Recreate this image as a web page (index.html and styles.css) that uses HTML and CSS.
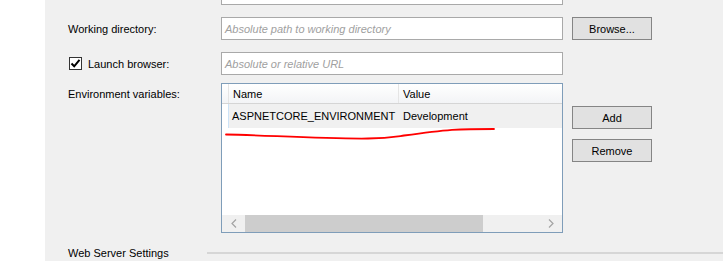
FILE: index.html
```html
<!DOCTYPE html>
<html lang="en">
<head>
  <meta charset="UTF-8">
  <title>Debug profile</title>
  <link rel="stylesheet" href="styles.css">
</head>
<body>
  <div class="gutter"></div>
  <div class="panel">
    <div class="row cut">
      <div class="label"></div>
      <div class="textbox"></div>
    </div>

    <div class="row first">
      <div class="label">Working directory:</div>
      <div class="textbox"><span class="hint">Absolute path to working directory</span></div>
      <button class="btn">Browse...</button>
    </div>

    <div class="row">
      <label class="label check">
        <span class="box">
          <svg width="11" height="11" viewBox="0 0 11 11"><path d="M1.5 5.5 L4.2 8.3 L9.5 1.8" fill="none" stroke="#000" stroke-width="2"/></svg>
        </span>
        Launch browser:
      </label>
      <div class="textbox"><span class="hint">Absolute or relative URL</span></div>
    </div>

    <div class="row env">
      <div class="label top">Environment variables:</div>
      <div class="listview">
        <div class="lv-head">
          <div class="lv-lead"></div>
          <div class="col name">Name</div>
          <div class="col value">Value</div>
        </div>
        <div class="lv-row">
          <div class="cell name">ASPNETCORE_ENVIRONMENT</div>
          <div class="cell value">Development</div>
        </div>
        <div class="lv-body"></div>
        <div class="hscroll">
          <div class="arrow">
            <svg width="6" height="9" viewBox="0 0 6 9"><path d="M5 0.5 L1 4.5 L5 8.5" fill="none" stroke="#a3a3a3" stroke-width="1.2"/></svg>
          </div>
          <div class="thumb"></div>
          <div class="track"></div>
          <div class="arrow">
            <svg width="6" height="9" viewBox="0 0 6 9"><path d="M1 0.5 L5 4.5 L1 8.5" fill="none" stroke="#a3a3a3" stroke-width="1.2"/></svg>
          </div>
        </div>
        <svg class="scribble" width="280" height="60" viewBox="0 0 280 60">
          <path d="M4 50.5 C 40 51, 100 55, 146 54.5 C 165 54.5, 172 53, 182 51.5 C 200 49, 215 47, 230 45.8 C 245 45, 258 45, 272 45" fill="none" stroke="#ff0000" stroke-width="1.8" stroke-linecap="round"/>
        </svg>
      </div>
      <div class="side">
        <button class="btn">Add</button>
        <button class="btn">Remove</button>
      </div>
    </div>

    <div class="section">
      <span>Web Server Settings</span>
      <div class="rule"></div>
    </div>
  </div>
</body>
</html>
```

FILE: styles.css
```css
body {
  margin: 0;
  display: flex;
  height: 261px;
  overflow: hidden;
  font-family: "Liberation Sans", Arial, sans-serif;
  font-size: 11px;
  color: #000;
  background: #fff;
}

.gutter {
  width: 45px;
  background: #fff;
}

.panel {
  flex: 1;
  background: #f0f0f0;
  padding-left: 23px;
}

.row {
  display: grid;
  grid-template-columns: 144px 342px 80px;
  column-gap: 9px;
  align-items: center;
  margin-top: 12px;
}

.row.cut {
  margin-top: -18px;
}

.row.env {
  margin-top: 8px;
  align-items: start;
}

.label {
  white-space: nowrap;
}

.label.top {
  padding-top: 5px;
}

.check {
  display: flex;
  align-items: center;
  gap: 6px;
  padding-left: 1px;
}

.box {
  width: 11px;
  height: 11px;
  border: 1px solid #333;
  background: #fff;
  display: flex;
}

.textbox {
  height: 21px;
  border: 1px solid #a9a9a9;
  background: #fff;
  display: flex;
  align-items: center;
  padding-left: 3px;
}

.hint {
  color: #a0a0a0;
  font-style: italic;
}

.btn {
  height: 23px;
  width: 80px;
  border: 1px solid #858585;
  background: #e1e1e1;
  font-family: inherit;
  font-size: 11px;
  color: #000;
  padding: 0;
}

.side {
  display: flex;
  flex-direction: column;
  gap: 10px;
  padding-top: 23px;
}

.listview {
  position: relative;
  height: 148px;
  border: 1px solid #7f9db9;
  background: #fff;
  display: flex;
  flex-direction: column;
  overflow: hidden;
}

.lv-head {
  display: flex;
  height: 19px;
  border-bottom: 1px solid #d5d5d5;
  background: linear-gradient(#fff, #f3f4f6);
}

.lv-lead {
  width: 6px;
  border-right: 1px solid #e5e5e5;
}

.col {
  display: flex;
  align-items: center;
  padding-left: 4px;
}

.col.name {
  width: 165px;
  border-right: 1px solid #e5e5e5;
}

.col.value {
  flex: 1;
}

.lv-row {
  display: flex;
  height: 24px;
  align-items: center;
  background: #f0f0f0;
  margin-left: 6px;
  border-left: 1px solid #cde3f7;
}

.cell.name {
  width: 171px;
  padding-left: 3px;
  white-space: nowrap;
}

.cell.value {
  flex: 1;
}

.lv-body {
  flex: 1;
}

.hscroll {
  display: flex;
  height: 17px;
  background: #f0f0f0;
}

.arrow {
  width: 23px;
  display: flex;
  align-items: center;
  justify-content: center;
}

.thumb {
  width: 238px;
  background: #cdcdcd;
}

.track {
  flex: 1;
}

.scribble {
  position: absolute;
  left: 0;
  top: 0;
  pointer-events: none;
}

.section {
  display: flex;
  align-items: center;
  margin-top: 12px;
  height: 15px;
}

.rule {
  flex: 1;
  height: 2px;
  margin-left: 38px;
  background: #d6d6d6;
}
```
